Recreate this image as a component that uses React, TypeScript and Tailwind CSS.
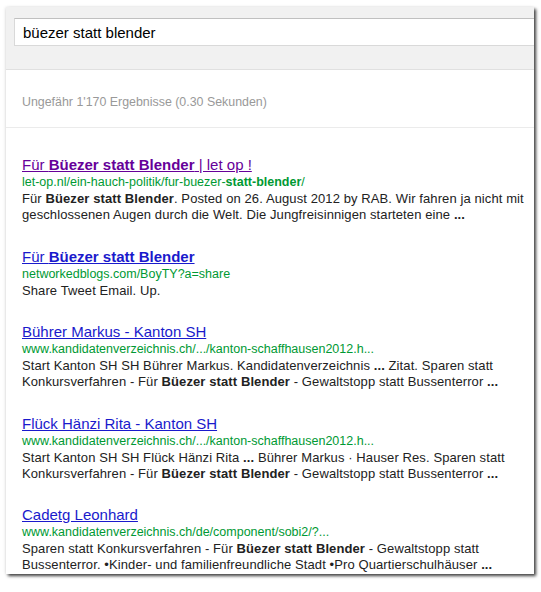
import React from "react";

type Part = { t: string; b?: boolean };

interface Result {
  title: Part[];
  visited?: boolean;
  url: Part[];
  lines: Part[][];
}

const results: Result[] = [
  {
    title: [{ t: "Für " }, { t: "Büezer statt Blender", b: true }, { t: " | let op !" }],
    visited: true,
    url: [{ t: "let-op.nl/ein-hauch-politik/fur-buezer-" }, { t: "statt-blender", b: true }, { t: "/" }],
    lines: [
      [{ t: "Für " }, { t: "Büezer statt Blender", b: true }, { t: ". Posted on 26. August 2012 by RAB. Wir fahren ja nicht mit" }],
      [{ t: "geschlossenen Augen durch die Welt. Die Jungfreisinnigen starteten eine " }, { t: "...", b: true }],
    ],
  },
  {
    title: [{ t: "Für " }, { t: "Büezer statt Blender", b: true }],
    url: [{ t: "networkedblogs.com/BoyTY?a=share" }],
    lines: [[{ t: "Share Tweet Email. Up." }]],
  },
  {
    title: [{ t: "Bührer Markus - Kanton SH" }],
    url: [{ t: "www.kandidatenverzeichnis.ch/.../kanton-schaffhausen2012.h..." }],
    lines: [
      [{ t: "Start Kanton SH SH Bührer Markus. Kandidatenverzeichnis " }, { t: "...", b: true }, { t: " Zitat. Sparen statt" }],
      [{ t: "Konkursverfahren - Für " }, { t: "Büezer statt Blender", b: true }, { t: " - Gewaltstopp statt Bussenterror " }, { t: "...", b: true }],
    ],
  },
  {
    title: [{ t: "Flück Hänzi Rita - Kanton SH" }],
    url: [{ t: "www.kandidatenverzeichnis.ch/.../kanton-schaffhausen2012.h..." }],
    lines: [
      [{ t: "Start Kanton SH SH Flück Hänzi Rita " }, { t: "...", b: true }, { t: " Bührer Markus · Hauser Res. Sparen statt" }],
      [{ t: "Konkursverfahren - Für " }, { t: "Büezer statt Blender", b: true }, { t: " - Gewaltstopp statt Bussenterror " }, { t: "...", b: true }],
    ],
  },
  {
    title: [{ t: "Cadetg Leonhard" }],
    url: [{ t: "www.kandidatenverzeichnis.ch/de/component/sobi2/?..." }],
    lines: [
      [{ t: "Sparen statt Konkursverfahren - Für " }, { t: "Büezer statt Blender", b: true }, { t: " - Gewaltstopp statt" }],
      [{ t: "Bussenterror. •Kinder- und familienfreundliche Stadt •Pro Quartierschulhäuser " }, { t: "...", b: true }],
    ],
  },
];

const renderParts = (parts: Part[]) =>
  parts.map((p, i) => (p.b ? <b key={i}>{p.t}</b> : <span key={i}>{p.t}</span>));

export default function App() {
  return (
    <div className="w-[541px] h-[592px] bg-white pl-[6px] pt-[7px] font-['Liberation_Sans',Arial,sans-serif]">
      <div className="w-[528px] h-[567px] bg-white overflow-hidden shadow-[2px_2px_3px_rgba(0,0,0,0.75),-1px_0_3px_rgba(0,0,0,0.08)]">
        <div className="h-[63px] bg-[#f1f1f1] border-b border-[#e0e0e0] pt-[11px] pl-[8px]">
          <div className="w-[560px] h-[28px] bg-white border border-[#d9d9d9] border-t-[#c0c0c0] pl-[8px] pt-[2px] flex items-center text-[15px] text-black">
            büezer statt blender
          </div>
        </div>
        <div className="h-[58px] border-b border-[#ebebeb] pl-[16px] pt-[23px] text-[12.4px] text-[#999]">
          Ungefähr 1'170 Ergebnisse (0.30 Sekunden)
        </div>
        <div className="pl-[16px] pt-[27px] flex flex-col gap-[23.5px]">
          {results.map((r, i) => (
            <div key={i} className="flex flex-col">
              <a
                className={`text-[15px] leading-[19px] underline w-fit ${r.visited ? "text-[#660099]" : "text-[#1a1acc]"}`}
                href="#"
              >
                {renderParts(r.title)}
              </a>
              <div className="text-[12.5px] leading-[17px] text-[#009933] whitespace-nowrap">{renderParts(r.url)}</div>
              {r.lines.map((l, j) => (
                <div key={j} className="text-[13px] leading-[16px] tracking-[0.1px] text-[#222] whitespace-nowrap">
                  {renderParts(l)}
                </div>
              ))}
            </div>
          ))}
        </div>
      </div>
    </div>
  );
}
